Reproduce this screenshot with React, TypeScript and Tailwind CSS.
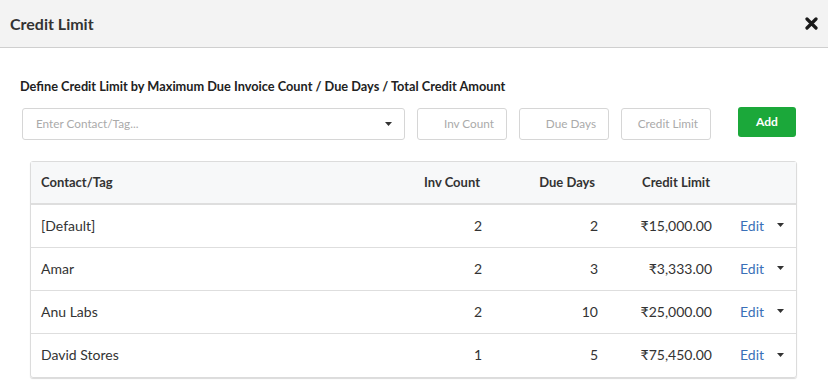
import React from "react";

type Row = {
    name: string;
    inv: number;
    days: number;
    limit: string;
};

const rows: Row[] = [
    { name: "[Default]", inv: 2, days: 2, limit: "₹15,000.00" },
    { name: "Amar", inv: 2, days: 3, limit: "₹3,333.00" },
    { name: "Anu Labs", inv: 2, days: 10, limit: "₹25,000.00" },
    { name: "David Stores", inv: 1, days: 5, limit: "₹75,450.00" },
];

function Caret({ className }: { className?: string }) {
    return (
        <svg width="7" height="4" viewBox="0 0 7 4" className={className}>
            <path d="M0 0 L7 0 L3.5 4 Z" fill="#333" />
        </svg>
    );
}

const cols = "grid grid-cols-[350px_112px_116px_114px_1fr]";

export default function App() {
    return (
        <div className="w-[828px] h-[392px] bg-white text-[#333] font-['Lato','Liberation_Sans',sans-serif] overflow-hidden">
            <div className="h-[48px] bg-[#f3f3f3] border-b border-[#cfcfcf] flex items-center justify-between pl-[10px] pr-[10px]">
                <h1 className="text-[16px] font-bold text-[#333]">Credit Limit</h1>
                <svg width="13" height="13" viewBox="0 0 13 13">
                    <path d="M2 2 L11 11 M11 2 L2 11" stroke="#1a1a1a" strokeWidth="3.2" strokeLinecap="round" />
                </svg>
            </div>

            <div className="pl-[20px] pr-[32px] pt-[30px]">
                <p className="text-[12.75px] font-bold text-[#222] leading-[16px]">
                    Define Credit Limit by Maximum Due Invoice Count / Due Days / Total Credit Amount
                </p>

                <div className="flex items-start mt-[14px] pl-[2px]">
                    <div className="w-[383px] h-[32px] border border-[#d6d6d6] rounded-[3px] flex items-center justify-between pl-[13px] pr-[12px]">
                        <span className="text-[11.75px] text-[#aaa]">Enter Contact/Tag...</span>
                        <Caret />
                    </div>
                    <div className="w-[90px] h-[32px] ml-[12px] border border-[#d6d6d6] rounded-[3px] flex items-center justify-end pr-[12px] text-[11.75px] text-[#aaa]">
                        Inv Count
                    </div>
                    <div className="w-[90px] h-[32px] ml-[12px] border border-[#d6d6d6] rounded-[3px] flex items-center justify-end pr-[12px] text-[11.75px] text-[#aaa]">
                        Due Days
                    </div>
                    <div className="w-[90px] h-[32px] ml-[12px] border border-[#d6d6d6] rounded-[3px] flex items-center justify-end pr-[12px] text-[11.75px] text-[#aaa]">
                        Credit Limit
                    </div>
                    <button className="w-[58px] h-[30px] ml-[27px] -mt-[1px] bg-[#1ba83a] rounded-[3px] text-white text-[12px] font-bold">
                        Add
                    </button>
                </div>

                <div className="mt-[21px] ml-[10px] w-[767px] border border-[#dcdcdc] rounded-[3px] shadow-[0_1px_1px_rgba(0,0,0,0.15)]">
                    <div className={`${cols} h-[43px] items-center bg-[#f7f8f9] border-b-2 border-[#dedede] text-[13px] font-bold`}>
                        <div className="pl-[10px]">Contact/Tag</div>
                        <div className="text-right pr-[13px]">Inv Count</div>
                        <div className="text-right pr-[14px]">Due Days</div>
                        <div className="text-right pr-[13px]">Credit Limit</div>
                        <div></div>
                    </div>
                    {rows.map((r, i) => (
                        <div
                            key={r.name}
                            className={`${cols} h-[43px] items-center text-[14px] ${i < rows.length - 1 ? "border-b border-[#dedede]" : ""}`}
                        >
                            <div className="pl-[10px] -mt-[2px]">{r.name}</div>
                            <div className="text-right pr-[11px] -mt-[2px]">{r.inv}</div>
                            <div className="text-right pr-[11px] -mt-[2px]">{r.days}</div>
                            <div className="text-right pr-[11px] -mt-[2px]">{r.limit}</div>
                            <div className="flex items-center pl-[17px] -mt-[2px]">
                                <span className="text-[#3a70b8]">Edit</span>
                                <Caret className="ml-[13px]" />
                            </div>
                        </div>
                    ))}
                </div>
            </div>
        </div>
    );
}
